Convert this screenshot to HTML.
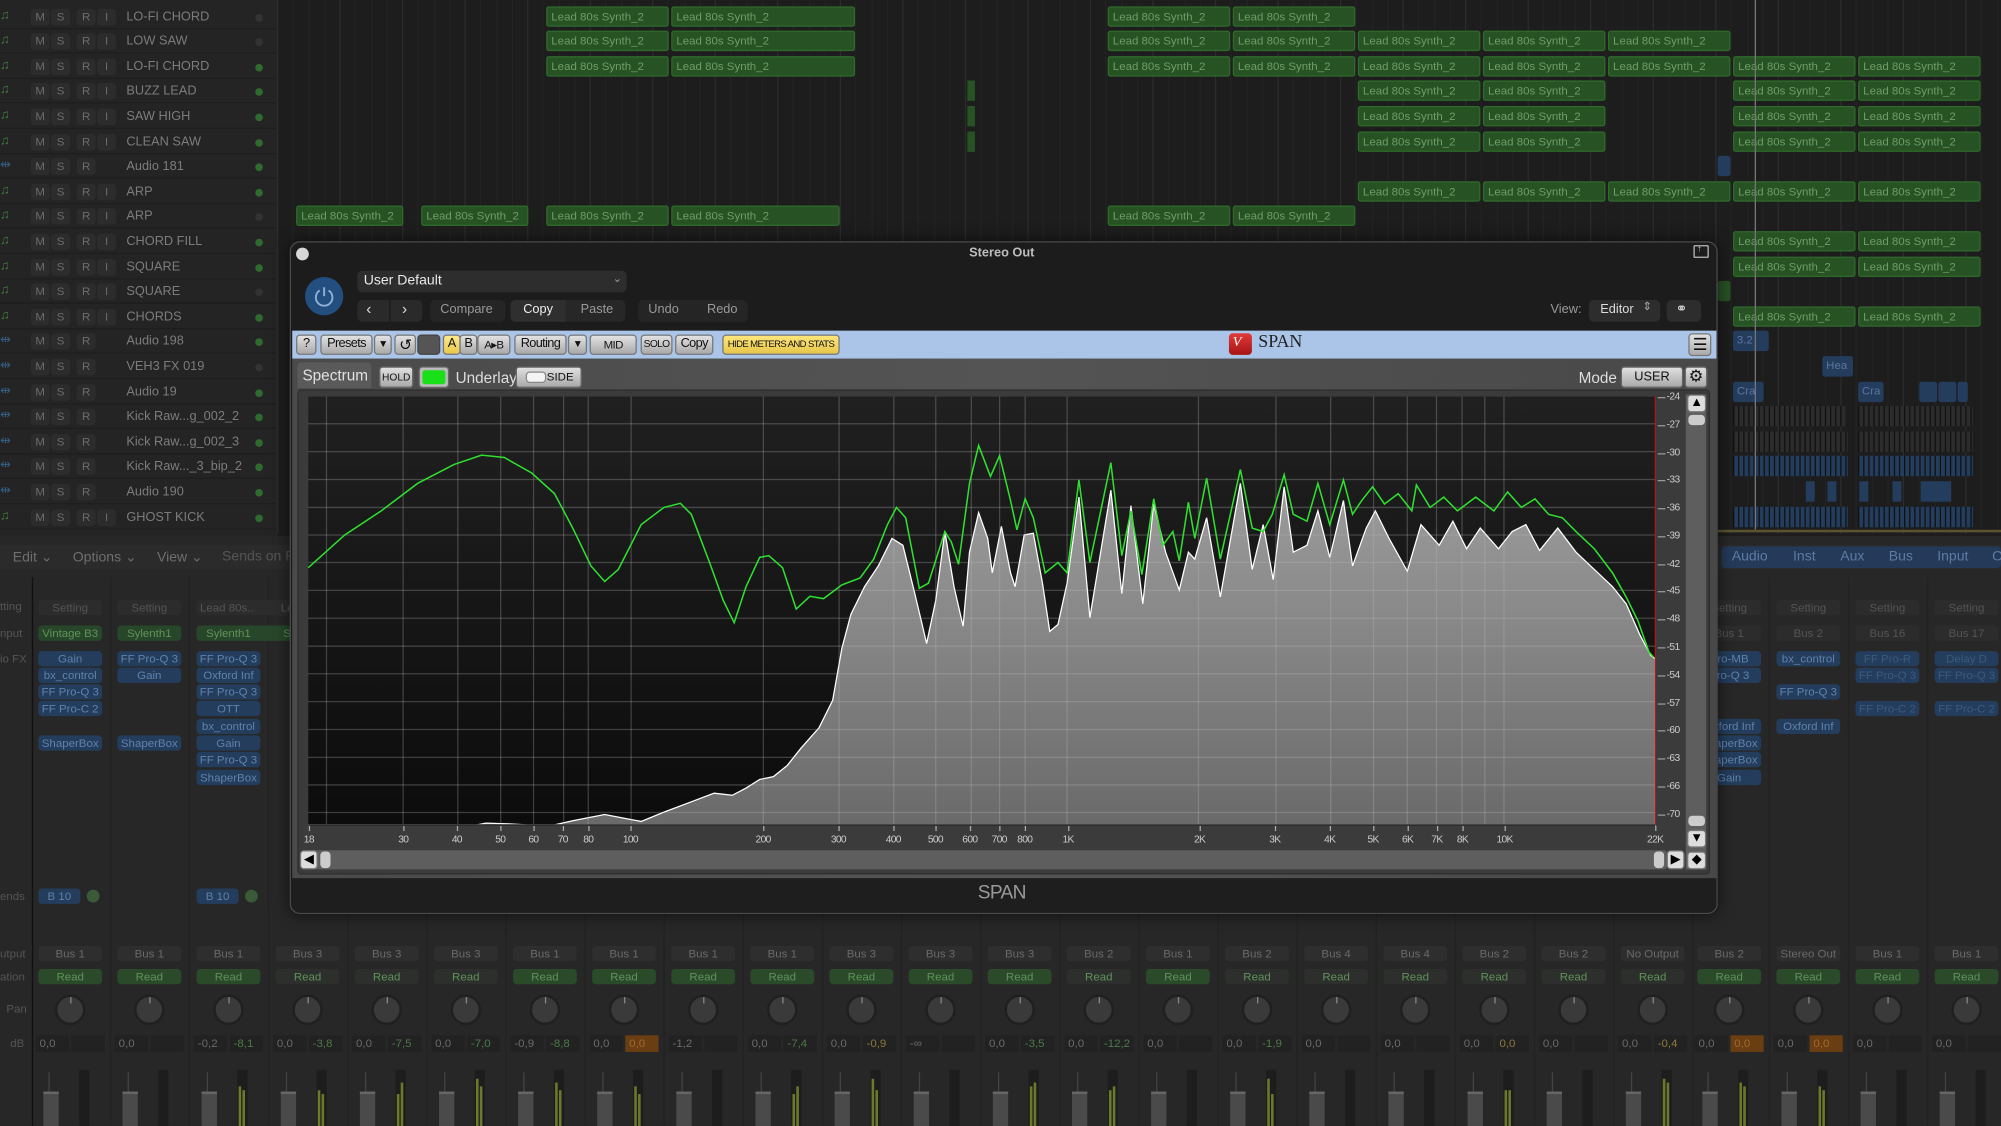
<!DOCTYPE html>
<html><head><meta charset="utf-8">
<style>
*{box-sizing:border-box;margin:0;padding:0}
html,body{width:2001px;height:1126px;overflow:hidden;background:#262626}
body{font-family:"Liberation Sans",sans-serif}
#w{position:absolute;left:0;top:0;width:1568px;height:882px;transform:scale(1.27615,1.2766);transform-origin:0 0;background:#262626;overflow:hidden}
.a{position:absolute}
.t{position:absolute;white-space:nowrap}
.btn{position:absolute;border-radius:3px;text-align:center;white-space:nowrap;overflow:hidden}
.nar{letter-spacing:-0.5px}
.tb{position:absolute;top:262px;height:16px;background:linear-gradient(#e2e2e2,#a9a9a9);border:1px solid #777;border-radius:3px;font-size:10px;line-height:14px;color:#111;text-align:center;letter-spacing:-0.5px;overflow:hidden;white-space:nowrap}
svg *{vector-effect:non-scaling-stroke}
</style></head><body>
<div id="w">
<div class="a" style="left:217px;top:0;width:1351px;height:420px;background:#1d1d1d"></div>
<div class="a" id="grid" style="left:217px;top:0;width:1351px;height:418px"></div>
<div class="a" style="left:0;top:0;width:216px;height:420px;background:#242424" id="tracks"></div>
<div class="a" id="regions" style="left:0;top:0;width:1568px;height:420px"></div>
<div class="a" style="left:1375px;top:0;width:1px;height:415px;background:#777"></div>
<div class="a" style="left:1346px;top:415px;width:222px;height:2px;background:#5b5330"></div>
<div class="a" style="left:0;top:420px;width:1568px;height:462px;background:#272727"></div>
<div class="a" style="left:0;top:427px;width:1568px;height:19px;background:#2b2b2b"></div>
<div class="t" style="left:10px;top:430px;font-size:11px;color:#6e6e6e">Edit ⌄</div>
<div class="t" style="left:57px;top:430px;font-size:11px;color:#6e6e6e">Options ⌄</div>
<div class="t" style="left:123px;top:430px;font-size:11px;color:#6e6e6e">View ⌄</div>
<div class="t" style="left:174px;top:430px;font-size:11px;color:#555">Sends on F</div>
<div class="a" style="left:1349px;top:428px;width:219px;height:17px;background:#243a58;border-radius:3px"></div>
<div class="t" style="left:1357px;top:430px;font-size:11px;color:#5c7ca6">Audio</div>
<div class="t" style="left:1405px;top:430px;font-size:11px;color:#5c7ca6">Inst</div>
<div class="t" style="left:1442px;top:430px;font-size:11px;color:#5c7ca6">Aux</div>
<div class="t" style="left:1480px;top:430px;font-size:11px;color:#5c7ca6">Bus</div>
<div class="t" style="left:1518px;top:430px;font-size:11px;color:#5c7ca6">Input</div>
<div class="t" style="left:1561px;top:430px;font-size:11px;color:#5c7ca6">O</div>
<div class="a" style="left:25px;top:452px;width:1px;height:430px;background:#111"></div>
<div id="mixer"></div>
<div class="t" style="left:0;top:470px;font-size:9px;color:#555">tting</div>
<div class="t" style="left:0;top:491px;font-size:9px;color:#555">nput</div>
<div class="t" style="left:0;top:511px;font-size:9px;color:#555">io FX</div>
<div class="t" style="left:0;top:697px;font-size:9px;color:#555">ends</div>
<div class="t" style="left:0;top:742px;font-size:9px;color:#555">utput</div>
<div class="t" style="left:0;top:760px;font-size:9px;color:#555">ation</div>
<div class="t" style="left:5px;top:785px;font-size:9px;color:#555">Pan</div>
<div class="t" style="left:8px;top:812px;font-size:9px;color:#555">dB</div>

<div class="a" style="left:227px;top:189px;width:1119px;height:527px;background:#1c1c1c;border:1px solid #4a4a4a;border-radius:8px;box-shadow:0 0 12px rgba(0,0,0,.6)"></div>
<div class="a" style="left:232px;top:194px;width:10px;height:10px;border-radius:5px;background:#d8d8d8"></div>
<div class="t" style="left:740px;top:193px;width:90px;text-align:center;font-size:10px;font-weight:bold;color:#bdbdbd">Stereo Out</div>
<div class="a" style="left:1327px;top:192px;width:12px;height:10px;border:1px solid #bbb;border-radius:1px"></div>
<div class="t" style="left:1330px;top:192px;font-size:7px;color:#ccc">↑</div>
<div class="a" style="left:239px;top:217px;width:30px;height:30px;border-radius:15px;background:#234f80"></div>
<svg class="a" style="left:245px;top:223px" width="18" height="18" viewBox="0 0 18 18"><path d="M5.5 4.5A6.5 6.5 0 1 0 12.5 4.5" fill="none" stroke="#8fb0d4" stroke-width="1.5"/><path d="M9 2V9" stroke="#8fb0d4" stroke-width="1.5"/></svg>
<div class="a" style="left:280px;top:212px;width:211px;height:17px;background:#2d2d2d;border-radius:4px"></div>
<div class="t" style="left:285px;top:214px;font-size:11px;color:#e8e8e8">User Default</div>
<div class="t" style="left:480px;top:213px;font-size:9px;color:#999">⌄</div>
<div class="a" style="left:280px;top:235px;width:51px;height:17px;background:#2a2a2a;border-radius:4px"></div>
<div class="a" style="left:305px;top:235px;width:1px;height:17px;background:#1c1c1c"></div>
<div class="t" style="left:287px;top:235px;font-size:12px;color:#ddd">‹</div>
<div class="t" style="left:315px;top:235px;font-size:12px;color:#ddd">›</div>
<div class="a" style="left:337px;top:235px;width:59px;height:17px;background:#252525;border-radius:4px"></div>
<div class="t" style="left:345px;top:237px;font-size:10px;color:#9a9a9a">Compare</div>
<div class="a" style="left:400px;top:235px;width:90px;height:17px;background:#272727;border-radius:4px"></div>
<div class="a" style="left:400px;top:235px;width:43px;height:17px;background:#2f2f2f;border-radius:4px 0 0 4px"></div>
<div class="t" style="left:410px;top:237px;font-size:10px;color:#eee">Copy</div>
<div class="t" style="left:455px;top:237px;font-size:10px;color:#9a9a9a">Paste</div>
<div class="a" style="left:500px;top:235px;width:86px;height:17px;background:#252525;border-radius:4px"></div>
<div class="t" style="left:508px;top:237px;font-size:10px;color:#9a9a9a">Undo</div>
<div class="t" style="left:554px;top:237px;font-size:10px;color:#9a9a9a">Redo</div>
<div class="t" style="left:1215px;top:237px;font-size:10px;color:#9a9a9a">View:</div>
<div class="a" style="left:1245px;top:235px;width:56px;height:17px;background:#2d2d2d;border-radius:4px"></div>
<div class="t" style="left:1254px;top:237px;font-size:10px;color:#ddd">Editor</div>
<div class="t" style="left:1287px;top:235px;font-size:9px;color:#aaa">⇕</div>
<div class="a" style="left:1306px;top:235px;width:27px;height:17px;background:#2d2d2d;border-radius:4px"></div>
<div class="t" style="left:1313px;top:235px;font-size:11px;color:#ddd">⚭</div>

<div class="a" style="left:229px;top:259px;width:1116px;height:22px;background:#abc5e8"></div>
<div class="tb" style="left:232px;width:16px">?</div>
<div class="tb" style="left:251px;width:41px">Presets</div>
<div class="tb" style="left:293px;width:14px;font-size:8px">▼</div>
<div class="tb" style="left:309px;width:17px;font-size:12px">↺</div>
<div class="tb" style="left:327px;width:18px;background:#555;border-color:#444"></div>
<div class="tb" style="left:347px;width:14px;background:linear-gradient(#ffe98a,#e9c84a)">A</div>
<div class="tb" style="left:360px;width:14px">B</div>
<div class="tb" style="left:374px;width:26px;font-size:9px">A▸B</div>
<div class="tb" style="left:403px;width:41px">Routing</div>
<div class="tb" style="left:445px;width:15px;font-size:8px">▼</div>
<div class="tb" style="left:462px;width:37px;font-size:9px">MID</div>
<div class="tb" style="left:502px;width:25px;font-size:8px">SOLO</div>
<div class="tb" style="left:529px;width:30px">Copy</div>
<div class="tb" style="left:566px;width:92px;background:linear-gradient(#ffe67a,#e6c64a);font-size:7.5px">HIDE METERS AND STATS</div>
<div class="a" style="left:963px;top:261px;width:18px;height:17px;border-radius:3px;background:linear-gradient(#e23a3a,#a81414)"></div>
<div class="t" style="left:966px;top:262px;font-size:11px;color:#fff;font-family:'Liberation Serif',serif;font-style:italic">V</div>
<div class="t" style="left:986px;top:261px;font-size:14px;color:#222;font-family:'Liberation Serif',serif">SPAN</div>
<div class="tb" style="left:1323px;width:18px;top:261px;height:18px;font-size:13px;line-height:15px">☰</div>

<div class="a" style="left:229px;top:281px;width:1116px;height:407px;background:linear-gradient(90deg,#4a4a4a,#545454 50%,#484848)"></div>
<div class="a" style="left:233px;top:284px;width:58px;height:20px;background:#5a5a5a;border-radius:3px 3px 0 0"></div>
<div class="t" style="left:237px;top:287px;font-size:12px;color:#e0e0e0">Spectrum</div>
<div class="btn" style="left:297px;top:287px;width:27px;height:17px;background:linear-gradient(#e0e0e0,#a8a8a8);border:1px solid #666;font-size:8px;line-height:15px;color:#111">HOLD</div>
<div class="a" style="left:328px;top:287px;width:24px;height:17px;background:#bbb;border:1px solid #666;border-radius:3px"></div>
<div class="a" style="left:331px;top:290px;width:18px;height:11px;background:#19e019;border-radius:2px"></div>
<div class="t" style="left:357px;top:289px;font-size:12px;color:#ddd">Underlay</div>
<div class="btn" style="left:404px;top:287px;width:52px;height:17px;background:linear-gradient(#e0e0e0,#a8a8a8);border:1px solid #666;font-size:9px;line-height:15px;color:#111;padding-left:18px">SIDE</div>
<div class="a" style="left:412px;top:291px;width:16px;height:9px;background:#f4f4f4;border:1px solid #888;border-radius:3px"></div>
<div class="t" style="left:1237px;top:289px;font-size:12px;color:#ddd">Mode</div>
<div class="btn" style="left:1270px;top:287px;width:49px;height:17px;background:linear-gradient(#e0e0e0,#a8a8a8);border:1px solid #666;font-size:10px;line-height:15px;color:#111">USER</div>
<div class="btn" style="left:1320px;top:287px;width:18px;height:17px;background:linear-gradient(#e0e0e0,#a8a8a8);border:1px solid #666;font-size:13px;line-height:14px;color:#111">⚙</div>
<div class="a" style="left:233px;top:305px;width:1107px;height:380px;background:#3b3b3b;border:1px solid #2e2e2e;border-radius:3px"></div>

<svg class="a" style="left:0;top:0" width="1568" height="882" viewBox="0 0 1568 882">
<defs>
<linearGradient id="bk" x1="0" y1="0" x2="0" y2="1"><stop offset="0" stop-color="#202020"/><stop offset="1" stop-color="#0c0c0c"/></linearGradient>
<linearGradient id="gf" x1="0" y1="0" x2="0" y2="1"><stop offset="0" stop-color="#9c9c9c"/><stop offset="1" stop-color="#6a6a6a"/></linearGradient>
</defs>
<g transform="translate(227.25,297.7) scale(0.7147,0.2697)">
<rect x="20" y="48" width="1477" height="1244" fill="url(#bk)"/>
<polygon fill="url(#gf)" stroke="#fff" stroke-width="1" points="20,1292 205,1292 215,1287 240,1289 260,1292 290,1292 310,1280 345,1262 365,1272 385,1282 410,1255 440,1225 465,1200 485,1206 500,1185 515,1160 530,1152 545,1120 560,1070 580,1010 595,930 605,780 615,680 630,600 645,540 660,460 672,480 685,620 698,765 708,640 718,440 728,600 738,715 745,500 755,385 765,460 770,560 780,425 790,560 795,600 805,450 815,445 825,590 833,730 842,710 852,590 865,340 877,690 900,320 912,620 922,365 935,650 947,360 960,500 975,610 985,500 992,520 1005,400 1020,630 1042,300 1055,550 1067,420 1078,580 1090,310 1100,500 1115,480 1127,380 1140,515 1155,350 1165,540 1180,430 1190,380 1205,460 1225,555 1240,420 1260,480 1275,410 1290,490 1305,430 1325,490 1340,440 1355,420 1370,495 1390,430 1410,500 1430,550 1450,600 1465,650 1480,740 1492,800 1497,810 1497,1292"/>
<g id="gl" stroke="#bbb" stroke-opacity="0.28" stroke-width="1"></g>
<polyline fill="none" stroke="#2fe02f" stroke-width="1.2" points="20,545 60,450 100,380 140,300 180,245 210,218 235,225 265,270 290,330 310,430 330,540 345,585 360,550 385,420 410,370 428,358 440,390 460,530 475,640 487,705 500,600 515,515 525,510 540,545 555,665 570,628 585,635 605,595 625,575 640,520 655,420 665,370 675,400 690,605 700,590 718,440 725,470 733,535 745,300 755,190 768,280 778,220 790,350 797,435 806,345 815,400 828,560 842,530 852,560 865,290 877,530 900,240 912,510 922,380 934,565 947,345 957,480 968,440 975,525 985,355 992,460 1005,285 1020,520 1042,260 1055,430 1067,440 1077,390 1090,275 1100,390 1115,410 1127,300 1140,420 1155,290 1165,390 1175,350 1187,310 1200,360 1215,330 1230,380 1235,305 1250,370 1265,340 1280,380 1300,340 1320,380 1335,325 1350,370 1365,345 1380,390 1395,400 1410,440 1430,490 1450,560 1465,630 1478,700 1490,790 1495,805"/>
<line x1="1497" y1="48" x2="1497" y2="1292" stroke="#b01818" stroke-width="1"/>
<line x1="20" y1="1292" x2="1497" y2="1292" stroke="#222" stroke-width="1"/>
</g>
</svg>
<div id="lbl"></div>
<div class="a" style="left:1321px;top:309px;width:16px;height:372px;background:#5e5e5e"></div>
<div class="btn" style="left:1322px;top:309px;width:15px;height:14px;background:#ddd;border:1px solid #777;font-size:10px;line-height:12px;color:#000">▲</div>
<div class="a" style="left:1323px;top:325px;width:13px;height:8px;background:#ccc;border-radius:3px"></div>
<div class="a" style="left:1323px;top:639px;width:13px;height:8px;background:#ccc;border-radius:3px"></div>
<div class="btn" style="left:1322px;top:650px;width:15px;height:14px;background:#ddd;border:1px solid #777;font-size:10px;line-height:12px;color:#000">▼</div>
<div class="btn" style="left:1322px;top:667px;width:15px;height:14px;background:#ddd;border:1px solid #777;font-size:10px;line-height:12px;color:#000">◆</div>
<div class="a" style="left:236px;top:666px;width:1070px;height:15px;background:#5e5e5e;border-radius:2px"></div>
<div class="btn" style="left:235px;top:666px;width:14px;height:15px;background:#ddd;border:1px solid #777;font-size:10px;line-height:13px;color:#000">◀</div>
<div class="a" style="left:251px;top:667px;width:8px;height:13px;background:#ccc;border-radius:3px"></div>
<div class="a" style="left:1296px;top:667px;width:8px;height:13px;background:#ccc;border-radius:3px"></div>
<div class="btn" style="left:1306px;top:666px;width:14px;height:15px;background:#ddd;border:1px solid #777;font-size:10px;line-height:13px;color:#000">▶</div>
<div class="a" style="left:228px;top:688px;width:1117px;height:27px;background:#1e1e1e;border-radius:0 0 8px 8px"></div>
<div class="t nar" style="left:745px;top:691px;width:80px;text-align:center;font-size:15px;color:#9a9a9a">SPAN</div>
</div>
<script>
function el(h){document.getElementById('w').insertAdjacentHTML('beforeend',h)}
var g='';for(var x=217;x<1568;x+=12.25){g+='<div class="a" style="left:'+(x-217)+'px;top:0;width:1px;height:418px;background:'+(Math.round((x-217)/12.25)%4==0?'#2c2c2c':'#232323')+'"></div>'}
document.getElementById('grid').innerHTML=g;
var names=['LO-FI CHORD','LOW SAW','LO-FI CHORD','BUZZ LEAD','SAW HIGH','CLEAN SAW','Audio 181','ARP','ARP','CHORD FILL','SQUARE','SQUARE','CHORDS','Audio 198','VEH3 FX 019','Audio 19','Kick Raw...g_002_2','Kick Raw...g_002_3','Kick Raw..._3_bip_2','Audio 190','GHOST KICK'];
var dark=[0,1,8,11,14];var t='';
for(var i=0;i<21;i++){var y=3.5+i*19.6;var au=/Audio|VEH|Kick/.test(names[i]);
t+='<div class="a" style="left:0;top:'+y+'px;width:216px;height:19px;border-bottom:1px solid #1e1e1e"></div>';
t+='<div class="t" style="left:0;top:'+(y+3)+'px;font-size:10px;color:'+(au?'#345a80':'#3d7a3d')+'">'+(au?'⇹':'♫')+'</div>';
var bs=[['M',24],['S',40],['R',60]];if(!au)bs.push(['I',76]);
bs.forEach(function(b){t+='<div class="btn" style="left:'+b[1]+'px;top:'+(y+3)+'px;width:15px;height:13px;background:#2c2c2c;font-size:9px;line-height:13px;color:#6c6c6c">'+b[0]+'</div>'});
t+='<div class="t" style="left:99px;top:'+(y+4)+'px;font-size:10px;color:#7c7c7c">'+names[i]+'</div>';
t+='<div class="a" style="left:200px;top:'+(y+7)+'px;width:6px;height:6px;border-radius:3px;background:'+(dark.indexOf(i)>=0?'#333':'#2f6a2f')+'"></div>';}
document.getElementById('tracks').innerHTML=t;
var R=[[0,[[428,524],[526,670],[868,964],[966,1062]]],[1,[[428,524],[526,670],[868,964],[966,1062],[1064,1160],[1162,1258],[1260,1356]]],[2,[[428,524],[526,670],[868,964],[966,1062],[1064,1160],[1162,1258],[1260,1356],[1358,1454],[1456,1552]]],[3,[[1064,1160],[1162,1258],[1358,1454],[1456,1552]]],[4,[[1064,1160],[1162,1258],[1358,1454],[1456,1552]]],[5,[[1064,1160],[1162,1258],[1358,1454],[1456,1552]]],[7,[[1064,1160],[1162,1258],[1260,1356],[1358,1454],[1456,1552]]],[8,[[232,316],[330,414],[428,524],[526,658],[868,964],[966,1062]]],[9,[[1358,1454],[1456,1552]]],[10,[[1358,1454],[1456,1552]]],[12,[[1358,1454],[1456,1552]]]];
var r='';R.forEach(function(row){var y=4.5+row[0]*19.6;row[1].forEach(function(s){r+='<div class="a" style="left:'+s[0]+'px;top:'+y+'px;width:'+(s[1]-s[0])+'px;height:16px;background:#275224;border:1px solid #2f6a2b;border-radius:2px;font-size:9px;color:#6f9c68;padding:2px 0 0 3px;white-space:nowrap;overflow:hidden">Lead 80s Synth_2</div>'})});
[3,4,5].forEach(function(i){r+='<div class="a" style="left:758px;top:'+(4.5+i*19.6)+'px;width:6px;height:16px;background:#275224"></div>'});
r+='<div class="a" style="left:1346px;top:'+(4.5+6*19.6)+'px;width:10px;height:16px;background:#243d5c;border-radius:2px"></div>';
r+='<div class="a" style="left:1346px;top:'+(4.5+11*19.6)+'px;width:10px;height:16px;background:#275224;border-radius:2px"></div>';
function blue(x,w,i,txt){r+='<div class="a" style="left:'+x+'px;top:'+(4.5+i*19.6)+'px;width:'+w+'px;height:16px;background:#243d5c;border-radius:2px;font-size:9px;color:#5877a0;padding:2px 0 0 3px;overflow:hidden;white-space:nowrap">'+(txt||'')+'</div>'}
blue(1358,28,13,'3.2');blue(1428,24,14,'Hea');blue(1358,24,15,'Cra');blue(1456,20,15,'Cra');blue(1504,14,15);blue(1519,14,15);blue(1534,8,15);
function stripe(x,w,i,c){var s='';for(var k=0;k<w;k+=4)s+='<div class="a" style="left:'+k+'px;top:0;width:1px;height:16px;background:#111"></div>';r+='<div class="a" style="left:'+x+'px;top:'+(4.5+i*19.6)+'px;width:'+w+'px;height:16px;background:'+c+'">'+s+'</div>'}
stripe(1358,88,16,'#2c2c2c');stripe(1456,90,16,'#2c2c2c');stripe(1358,90,17,'#2c2c2c');stripe(1456,90,17,'#2c2c2c');stripe(1358,90,18,'#243d5c');stripe(1456,90,18,'#243d5c');stripe(1358,90,20,'#243d5c');stripe(1456,90,20,'#243d5c');
[[1415,7],[1432,7],[1457,7],[1483,7],[1505,24]].forEach(function(b){r+='<div class="a" style="left:'+b[0]+'px;top:'+(4.5+19*19.6)+'px;width:'+b[1]+'px;height:16px;background:#243d5c"></div>'});
document.getElementById('regions').innerHTML=r;
var outs=['Bus 1','Bus 1','Bus 1','Bus 3','Bus 3','Bus 3','Bus 1','Bus 1','Bus 1','Bus 1','Bus 3','Bus 3','Bus 3','Bus 2','Bus 1','Bus 2','Bus 4','Bus 4','Bus 2','Bus 2','No Output','Bus 2','Stereo Out','Bus 1','Bus 1'];
var dbl=['0,0','0,0','-0,2','0,0','0,0','0,0','-0,9','0,0','-1,2','0,0','0,0','-∞','0,0','0,0','0,0','0,0','0,0','0,0','0,0','0,0','0,0','0,0','0,0','0,0','0,0'];
var dbr=['','','-8,1','-3,8','-7,5','-7,0','-8,8','o0,0','','-7,4','y-0,9','','-3,5','-12,2','','-1,9','','','y0,0','','y-0,4','o0,0','o0,0','',''];
var m='';
for(var k=0;k<25;k++){var c=55+k*62;if(k==21)c=1355;if(k==22)c=1417;if(k==23)c=1479;if(k==24)c=1541;var x=c-25;
m+='<div class="a" style="left:'+(c+31)+'px;top:452px;width:1px;height:430px;background:#222"></div>';
m+='<div class="btn" style="left:'+x+'px;top:741px;width:50px;height:12px;background:#2e2e2e;font-size:9px;line-height:12px;color:#6a6a6a">'+outs[k]+'</div>';
m+='<div class="btn" style="left:'+x+'px;top:759px;width:50px;height:12px;background:'+([3,4,5,13,15,16,17,18,19,20].indexOf(k)>=0?'#2c2f2c':'#2a4a2a')+';font-size:9px;line-height:12px;color:#5f935a">Read</div>';
m+='<div class="a" style="left:'+(c-12)+'px;top:779px;width:24px;height:24px;border-radius:12px;background:#3a3a3a;border:2px solid #202020"></div><div class="a" style="left:'+c+'px;top:781px;width:1px;height:5px;background:#888"></div>';
m+='<div class="t" style="left:'+(x-2)+'px;top:811px;width:26px;height:13px;background:#222;font-size:9px;line-height:13px;color:#6a6a6a;padding-left:3px">'+dbl[k]+'</div>';
var v=dbr[k],bg='#222',col='#4c7a48';if(v[0]=='o'){bg='#6a3e12';col='#a06a30';v=v.slice(1)}else if(v[0]=='y'){col='#8a7a3a';v=v.slice(1)}
m+='<div class="t" style="left:'+(x+26)+'px;top:811px;width:26px;height:13px;background:'+bg+';font-size:9px;line-height:13px;color:'+col+';padding-left:3px">'+v+'</div>';
m+='<div class="a" style="left:'+(x+8)+'px;top:840px;width:1px;height:42px;background:#444"></div><div class="a" style="left:'+(x+4)+'px;top:855px;width:12px;height:27px;background:#4a4a4a;border-top:2px solid #666"></div>';
m+='<div class="a" style="left:'+(x+32)+'px;top:838px;width:8px;height:44px;background:#1d1d1d"></div>';
if(dbr[k]&&dbr[k]!='')m+='<div class="a" style="left:'+(x+33)+'px;top:'+(845+k%5*3)+'px;width:2px;height:40px;background:#6a7a2a"></div><div class="a" style="left:'+(x+36)+'px;top:'+(848+k%4*3)+'px;width:2px;height:40px;background:#6a7a2a"></div>';}
function slot(c,y,txt,col){var bg=col=='g'?'#28472a':'#243d5c',fc=col=='g'?'#5f935a':(col=='d'?'#3b5a80':'#5f82ad');if(col=='s'){bg='#2c2c2c';fc='#555'}m+='<div class="btn" style="left:'+(c-25)+'px;top:'+y+'px;width:50px;height:12px;background:'+bg+';font-size:9px;line-height:12px;color:'+fc+'">'+txt+'</div>'}
var S=[[55,[['Setting','s',470],['Vintage B3','g',490],['Gain','b',510],['bx_control','b',523],['FF Pro-Q 3','b',536],['FF Pro-C 2','b',549],['ShaperBox','b',576]]],
[117,[['Setting','s',470],['Sylenth1','g',490],['FF Pro-Q 3','b',510],['Gain','b',523],['ShaperBox','b',576]]],
[179,[['Lead 80s...','s',470],['Sylenth1','g',490],['FF Pro-Q 3','b',510],['Oxford Inf','b',523],['FF Pro-Q 3','b',536],['OTT','b',549],['bx_control','b',563],['Gain','b',576],['FF Pro-Q 3','b',589],['ShaperBox','b',603]]],
[1355,[['Setting','s',470],['Bus 1','s',490],['Pro-MB','b',510],['Pro-Q 3','b',523],['Oxford Inf','b',563],['ShaperBox','b',576],['ShaperBox','b',589],['Gain','b',603]]],
[1417,[['Setting','s',470],['Bus 2','s',490],['bx_control','b',510],['FF Pro-Q 3','b',536],['Oxford Inf','b',563]]],
[1479,[['Setting','s',470],['Bus 16','s',490],['FF Pro-R','d',510],['FF Pro-Q 3','d',523],['FF Pro-C 2','d',549]]],
[1541,[['Setting','s',470],['Bus 17','s',490],['Delay D','d',510],['FF Pro-Q 3','d',523],['FF Pro-C 2','d',549]]]];
S.forEach(function(s){s[1].forEach(function(e){slot(s[0],e[2],e[0],e[1])})});
slot(225,470,'Le','s');slot(225,490,'S','g');
m+='<div class="btn" style="left:30px;top:696px;width:33px;height:12px;background:#243d5c;font-size:9px;line-height:12px;color:#5f82ad">B 10</div><div class="a" style="left:68px;top:697px;width:10px;height:10px;border-radius:5px;background:#3a5a3a"></div>';
m+='<div class="btn" style="left:154px;top:696px;width:33px;height:12px;background:#243d5c;font-size:9px;line-height:12px;color:#5f82ad">B 10</div><div class="a" style="left:192px;top:697px;width:10px;height:10px;border-radius:5px;background:#3a5a3a"></div>';
document.getElementById('mixer').outerHTML='<div>'+m+'</div>';
var gl='';[127,208,289,370,450,530,611,692,773,853,934,1015,1096,1176,1256].forEach(function(y){gl+='<line x1="20" y1="'+y+'" x2="1497" y2="'+y+'"/>'});
var fx=[40,124,184,231,267,300,327,374,519,602,662,708,747,778,806,852,996,1081,1141,1188,1225,1257,1285,1310,1331];
fx.forEach(function(x){gl+='<line x1="'+x+'" y1="48" x2="'+x+'" y2="1292"/>'});
document.getElementById('gl').innerHTML=gl;
var L='';var fl=[['18',242],['30',316],['40',358],['50',392],['60',418],['70',441],['80',461],['100',494],['200',598],['300',657],['400',700],['500',733],['600',760],['700',783],['800',803],['1K',837],['2K',940],['3K',999],['4K',1042],['5K',1076],['6K',1103],['7K',1126],['8K',1146],['10K',1179],['22K',1297]];
fl.forEach(function(f){L+='<div class="t nar" style="left:'+(f[1]-15)+'px;top:653px;width:30px;text-align:center;font-size:8px;color:#ccc">'+f[0]+'</div><div class="a" style="left:'+f[1]+'px;top:647px;width:1px;height:4px;background:#aaa"></div>'});
for(var d=24;d<=69;d+=3){var y=311+(d-24)*7.26;L+='<div class="t nar" style="left:1306px;top:'+(y-5)+'px;font-size:8px;color:#ccc">-'+(d==69?70:d)+'</div><div class="a" style="left:1299px;top:'+y+'px;width:6px;height:1px;background:#999"></div>'}
document.getElementById('lbl').outerHTML='<div>'+L+'</div>';
</script>
</body></html>
